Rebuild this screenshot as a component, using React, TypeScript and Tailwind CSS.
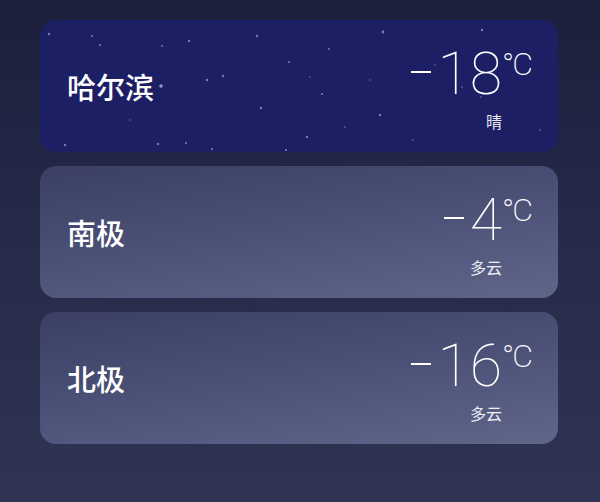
const cities = [
  { name: '哈尔滨', temp: '18', weather: '晴', night: true },
  { name: '南极', temp: '4', weather: '多云', night: false },
  { name: '北极', temp: '16', weather: '多云', night: false },
];

// star field for the night card, coords relative to the card
const stars: [number, number, number][] = [
  [9, 14, 1.2], [52, 16, 1], [60, 25, 1], [149, 21, 1.2], [122, 26, 0.9], [217, 16, 1.2],
  [343, 12, 1.4], [442, 10, 1.2], [289, 29, 0.9], [249, 42, 1], [-4, 57, 0.9], [121, 66, 1.8],
  [167, 60, 1.2], [183, 56, 1.2], [282, 74, 1], [221, 88, 1.2], [340, 95, 1.2], [305, 107, 0.8],
  [267, 117, 1.2], [25, 125, 1.2], [118, 124, 1.2], [146, 123, 1.1], [172, 129, 1.1],
  [246, 130, 1.1], [422, 67, 0.8], [441, 77, 0.8], [373, 120, 0.8], [270, 57, 0.7],
  [395, 45, 0.7], [330, 60, 0.7], [470, 40, 0.8], [500, 110, 0.8], [90, 100, 0.7],
];

function Stars() {
  return (
    <svg className="pointer-events-none absolute inset-0 h-full w-full" viewBox="0 0 518 132" preserveAspectRatio="none">
      {stars.map(([x, y, r], i) => (
        <circle key={i} cx={x} cy={y} r={r} fill="#c9cbf0" opacity={r > 1.5 ? 0.7 : 0.55} />
      ))}
    </svg>
  );
}

function CityCard({ name, temp, weather, night }: (typeof cities)[number]) {
  return (
    <div
      className={`relative flex h-[132px] w-full items-center justify-between overflow-hidden rounded-[16px] pl-[27px] pr-[56px] ${
        night
          ? 'bg-[#1d1f64]'
          : 'bg-[linear-gradient(172deg,#3a3f63_0%,#4a4f75_45%,#60658a_100%)]'
      }`}
    >
      {night && <Stars />}
      <span className="relative text-[29px] font-medium leading-[36px] text-white">{name}</span>
      <div className="relative mt-[3px] flex flex-col items-end">
        <div className="relative flex items-start font-['Roboto',sans-serif] text-[59px] font-thin leading-[59px] text-white">
          <span className="mr-[6px] mt-[27px] h-[2px] w-[20px] bg-white" />
          <span>{temp}</span>
          <span className="absolute left-full top-[4px] whitespace-nowrap text-[32px] font-extralight leading-[32px] tracking-[-2px]">°C</span>
        </div>
        <span className="mt-[8px] text-[16px] leading-[20px] text-white/90">{weather}</span>
      </div>
    </div>
  );
}

export default function App() {
  return (
    <div className="flex h-[502px] w-[600px] flex-col gap-[14px] bg-[linear-gradient(180deg,#1b1f3c_0%,#262b4a_50%,#2f3454_100%)] pl-[40px] pr-[42px] pt-[20px] font-['Noto_Sans_CJK_SC','Noto_Sans',sans-serif]">
      {cities.map((c) => (
        <CityCard key={c.name} {...c} />
      ))}
    </div>
  );
}
